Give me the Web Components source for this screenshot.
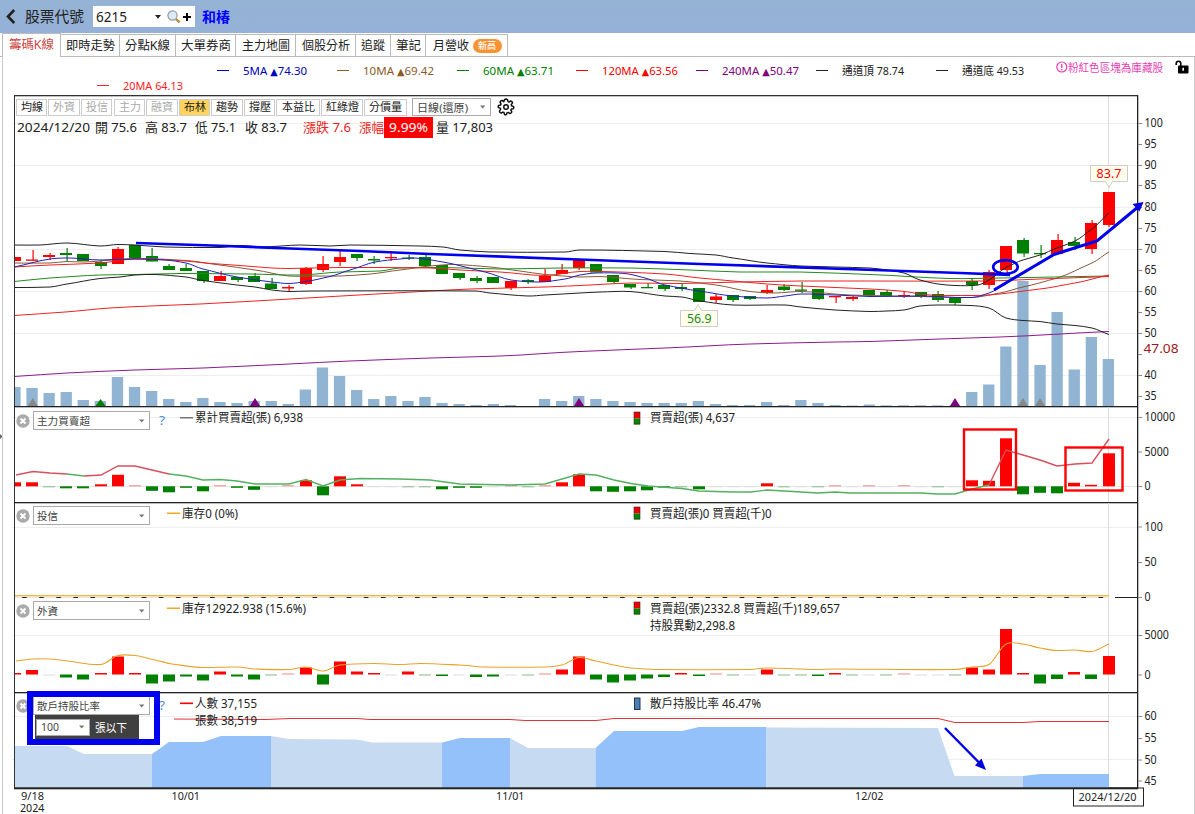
<!DOCTYPE html>
<html lang="zh-Hant">
<head>
<meta charset="utf-8">
<title>籌碼K線</title>
<style>
html,body{margin:0;height:100%;background:#fff;overflow:hidden;font-family:"Noto Sans","Noto Sans CJK TC",sans-serif}
</style>
</head>
<body>
<stock-app></stock-app>
<script>
const FONT='"Noto Sans","Noto Sans CJK TC",sans-serif';
const X=i=>15.6+17.085*i;
const el=(name,render)=>customElements.define(name,class extends HTMLElement{
  constructor(){super();this.attachShadow({mode:'open'});}
  connectedCallback(){this.shadowRoot.innerHTML=render(this);}
});
const text=(x,y,w,s,t,fill='#222',extra='')=>`<text x="${x}" y="${(y+s*.36).toFixed(2)}" textLength="${w}" lengthAdjust="spacingAndGlyphs" font-size="${s}" fill="${fill}" ${extra}>${t.replace('▲',`<tspan font-family="DejaVu Sans" font-size="${s*.85}">▲</tspan>`)}</text>`;
const line=(p,c,w=1,extra='')=>`<polyline points="${p}" fill="none" stroke="${c}" stroke-width="${w}" ${extra}/>`;
const rect=(x,y,w,h,c,extra='')=>`<rect x="${x}" y="${y}" width="${w}" height="${h}" fill="${c}" ${extra}/>`;
const smooth=(s,c,w=1)=>{
  const p=s.split(' ').map(q=>q.split(',').map(Number));let d=`M${p[0]}`;
  for(let i=0;i<p.length-1;i++){const a=p[i-1]||p[i],b=p[i],e=p[i+1],f=p[i+2]||e,k=(e[0]-b[0])/3;
    const m1=(e[1]-a[1])/(e[0]-a[0]),m2=(f[1]-b[1])/(f[0]-b[0]);
    d+=`C${b[0]+k},${(b[1]+k*m1*.8).toFixed(1)} ${e[0]-k},${(e[1]-k*m2*.8).toFixed(1)} ${e}`;}
  return `<path d="${d}" fill="none" stroke="${c}" stroke-width="${w}"/>`;
};

/* Single run of text drawn to a given width */
el('fit-text',e=>{
  const g=k=>e.getAttribute(k),w=+g('w'),s=+(g('size')||12),h=Math.ceil(s*1.3);
  return `<style>:host{display:block;flex:none;width:${w}px;height:${h}px;margin-left:${g('ml')||0}px;color:${g('color')||'inherit'}}svg{display:block;overflow:visible;font-family:${FONT.replace(/"/g,"'")}}</style>
  <svg width="${w}" height="${h}">${text(0,h/2,w,s,g('text'),'currentColor',`font-weight="${g('weight')||400}"`)}</svg>`;
});

el('select-box',e=>{
  const g=k=>e.getAttribute(k);
  return `<style>:host{display:flex;flex:none;align-items:center;justify-content:space-between;box-sizing:border-box;width:${g('w')}px;height:${g('h')||19}px;border:1px solid #aaa;background:#fff;color:#444;padding:0 4px 0 3px}</style>
  <slot></slot><svg width="6" height="4"><path d="M0 .5h5.4L2.7 3.5z" fill="#777"/></svg>`;
});

el('app-header',()=>`<style>
:host{display:flex;align-items:center;height:33px;background:linear-gradient(#95b3d4,#95b1d8);box-sizing:border-box;padding-left:6px;color:#222}
.in{display:flex;align-items:center;width:102px;height:21px;background:#fff;margin-left:9px;flex:none}
</style>
<svg width="10" height="15" viewBox="0 0 10 15"><path d="M8.2 1 2 7.5 8.2 14" fill="none" stroke="#222" stroke-width="2.6"/></svg>
<fit-text ml="9" w="59" size="15" text="股票代號"></fit-text>
<div class="in"><fit-text ml="3" w="31" size="14.5" text="6215"></fit-text>
<svg width="6" height="4" style="margin-left:28px"><path d="M0 0h6L3 3.8z" fill="#222"/></svg>
<svg width="14" height="14" viewBox="0 0 14 14" style="margin-left:6px"><circle cx="5.5" cy="5.5" r="4.6" fill="#d8ebf8" stroke="#999" stroke-width="1.2"/><path d="M9 9l3.5 3.3" stroke="#b58a3c" stroke-width="2.4"/></svg>
<svg width="8" height="8" style="margin-left:2px"><path d="M4 0v8M0 4h8" stroke="#000" stroke-width="2"/></svg></div>
<fit-text ml="7" w="28" size="14" weight="700" color="#00f" text="和椿"></fit-text>`);

el('app-tabs',()=>{
  const tabs=[['即時走勢',60,59,49],['分點K線',119,56,45],['大單券商',175,60,50],['主力地圖',235,60,48],['個股分析',295,60,48],['追蹤',355,35,24],['筆記',390,35,25]];
  return `<style>
:host{display:flex;align-items:flex-end;height:24px;box-sizing:border-box;border-bottom:1px solid #bbb;padding-left:2px}
div{box-sizing:border-box;display:flex;align-items:center;justify-content:center;height:22px;border:1px solid #bbb;border-bottom:0;border-left:0;background:#fff;color:#222}
.on{width:59px;height:24px;margin-bottom:-1px;border-left:1px solid #bbb;color:#c44;padding-right:1px;padding-bottom:1px}
.pill{width:29px;height:14px;border:0;border-radius:7px;background:#f99233;color:#fff;margin-left:4px;padding:0}
</style><div class="on"><fit-text w="45" size="12" text="籌碼K線"></fit-text></div>
${tabs.map(t=>`<div style="width:${t[2]}px"><fit-text w="${t[3]}" size="12.3" text="${t[0]}"></fit-text></div>`).join('')}
<div style="width:82px"><fit-text w="36" size="12.3" text="月營收" ml="1"></fit-text><div class="pill"><fit-text w="18" size="9" weight="500" text="新高"></fit-text></div></div>`;
});

el('ma-legend',()=>{
  const it=[['5MA ▲74.30','#00b',64],['10MA ▲69.42','#8a5a28',71],['60MA ▲63.71','#008000',71],['120MA ▲63.56','#f00',76],['240MA ▲50.47','#800080',77],['通道頂 78.74','#222',62],['通道底 49.53','#222',62]];
  const item=t=>`<div class="it" style="color:${t[1]}"><i></i><fit-text w="${t[2]}" size="11.5" text="${t[0]}"></fit-text></div>`;
  return `<style>
:host{display:flex;height:38px;position:relative;box-sizing:border-box}
.rows{width:1040px;padding-left:217px;box-sizing:border-box;padding-top:6px;flex:none}
.r{display:flex;height:15px}.it{display:flex;align-items:center;width:119.8px;flex:none}
i{width:12px;height:1px;background:currentColor;margin-right:14px}
.note{display:flex;align-items:center;height:20px;padding-left:16px;color:#e83fb4}
</style><div class="rows"><div class="r">${it.map(item).join('')}</div><div class="r" style="margin-left:-120px">${item(['20MA 64.13','#f22',60])}</div></div>
<div class="note"><svg width="12" height="12"><circle cx="5.8" cy="6" r="5" fill="none" stroke="#e83fb4" stroke-width="1.2"/><path d="M5.8 3v4M5.8 8v1.4" stroke="#e83fb4" stroke-width="1.3"/></svg><fit-text w="95" size="11.2" text="粉紅色區塊為庫藏股"></fit-text>
<svg width="14" height="14" viewBox="0 0 14 14" style="margin-left:12px"><path d="M1.2 5V3.5a2.3 2.3 0 0 1 4.6 0V6" fill="none" stroke="#000" stroke-width="1.6"/><rect x="3" y="5.5" width="10.5" height="8" rx="1" fill="#000"/><path d="M8.2 7.8v3" stroke="#fff" stroke-width="1.6"/></svg></div>`;
});

el('chart-toolbar',()=>{
  const b=[['均線',16,31,22],['外資',48,32,22,'#aaa'],['投信',81,31,22,'#aaa'],['主力',114,31,22,'#aaa'],['融資',146,32,22,'#aaa'],['布林',179,31,22,'','#ffd35c'],['趨勢',211,32,22],['撐壓',244,31,22],['本益比',276,44,33],['紅綠燈',321,42,33],['分價量',364,43,33]];
  return `<style>
:host{display:flex;flex-direction:column}
.r{display:flex;align-items:center;height:18px;padding-top:3px}
.b{display:flex;align-items:center;justify-content:center;height:17px;box-sizing:border-box;border:1px solid #ccc;flex:none;color:#222;padding-top:1px}
.info{display:flex;align-items:center;height:21px;padding-top:1px;color:#222;padding-left:17px}
.hot{display:flex;align-items:center;justify-content:center;width:49px;height:21px;background:#f00;color:#fff}
</style><div class="r">${b.map((t,i)=>`<div class="b" style="margin-left:${t[1]-(i?b[i-1][1]+b[i-1][2]:0)}px;width:${t[2]}px;${t[4]?'color:'+t[4]+';':''}${t[5]?'background:'+t[5]:''}"><fit-text w="${t[3]}" size="11" text="${t[0]}"></fit-text></div>`).join('')}
<select-box w="79" h="18" style="margin-left:5px"><fit-text w="51" size="11.3" ml="1" text="日線(還原)"></fit-text></select-box>
<svg width="18" height="18" viewBox="0 0 24 24" style="margin-left:6px" fill="none" stroke="#111" stroke-width="2" stroke-linejoin="round"><path d="M10 2.2Q12 .8 14 2.2L14.7 4.8 16 5.4 18.3 4Q20.7 4.6 20.7 6.8L19 8.7 19.4 10.4 22 11.5Q23 12.8 21.7 14.2L19.2 14.8 18.5 16.2 19.8 18.5Q19 21 16.8 20.6L14.8 19.2 13.3 19.8 12.6 22Q11.4 23 10 21.8L9.3 19.4 7.8 18.8 5.5 20.2Q3 19.3 3.4 17.1L4.8 15.1 4.3 13.7 2.1 12.8Q1 11.5 2.2 10L4.8 9.4 5.4 7.8 4 5.6Q4.8 3 7.2 3.4L9 4.9z"/><circle cx="12" cy="12" r="3"/></svg></div>
<div class="info"><fit-text w="73" size="12.8" text="2024/12/20"></fit-text>
<fit-text ml="5" w="42" size="12.8" text="開 75.6"></fit-text><fit-text ml="8" w="42" size="12.8" text="高 83.7"></fit-text><fit-text ml="8" w="41" size="12.8" text="低 75.1"></fit-text><fit-text ml="9" w="42" size="12.8" text="收 83.7"></fit-text>
<fit-text ml="16" w="48" size="12.8" color="#e22" text="漲跌 7.6"></fit-text><fit-text ml="8" w="25" size="12.8" color="#e22" text="漲幅"></fit-text><div class="hot"><fit-text w="39" size="12.5" text="9.99%"></fit-text></div><fit-text ml="3" w="57" size="12.8" text="量 17,803"></fit-text></div>`;
});

const frame=(y0,y1,labels,grid,bottom='#222')=>{
  let s=grid.map(y=>rect(12,y,1125,1,'#eee')).join('')+rect(1108,y0,1,y1-y0,'#ddd');
  return {under:s,over:rect(14,y0,1,y1-y0,'#333')+rect(1137,y0,1.3,y1-y0,'#222')+(bottom?rect(14,y1-1,1124,1.3,bottom):'')+labels.map(l=>rect(1138,l[0],4,1,'#888')+(l[1]?text(1144.5,l[0]-.3,l[1].length*6.1,12,l[1]):'')).join('')};
};
const stack=`:host{display:grid;position:relative}svg.c,.ui{grid-area:1/1}svg.c{display:block;overflow:visible;font-family:${FONT}}.ui{z-index:1;display:flex;flex-direction:column}`;

/* Price pane: [colour, body top, body bottom, wick top, wick bottom] per session */
const K='r257,261 r259.5,260.5,250 r255,257,253,260 g253,255,248,261 g254,261 g262,266,260,269 r249,264,247 g245,258 g256,261.5,248 g266,270,264 g268,271,264 g271,281,271,283 r276,281,271 g277,280,277,282 g276,282,273 g283.5,289,278 r287,288.5,285,291 r268,284,267,285 r264,270,256,272 r257,262,250,266 g254,258,254,261 g259,260.5,256,264 r257,258,251,261 g257.5,258,255,260 g257,266,253 g265,274 g273,278,273,280 g278,281,276,283 g277,283 r281,288,281,290 g280,282,279,284 r276,282,269 r270,274,264 r260,268,260,270 g264,272.5 g275,282,275,284 g284,287.5,284,289 g287,288,283 g285,289,285,291 g287,289,283,291 g288,302 r296.5,300,294,303 g295,300,295,302 g296,299,296,300 r290,293,285,294 g286.5,290,284,291 g289.5,290.5,282,293 g289,299,289,300 r296,297,296,303 r297,299,296,301 g290,295 g292,296,290,297 r295,296,292,298 g292,297,292,298 g294,300,291,302 g298,303,298,305 g281,285,279,290 r272,285,270,289 r246,270,246,273 g240,253.5,238,257 g253,254,245,258 r240,254,234,254 g242,246,237,250 r223,249,220,254 r192,225,192,227'.split(' ');
const V=[387,388,393,392,400,401,377,387,391,399,402,398,402,403,401,401,404,389.5,367.5,376,390,399,396,401,397,403,404,405,404,405,406,399,401,396,399,401,402,403,403,403,401,404,405,405,402,405,400,403,405,405.5,404.5,405.3,405.3,405.3,405.3,405.5,392,384.5,346.5,281,365,312,369.5,337,359];
el('price-chart',()=>{
  const f=frame(95,407,[[123,'100'],[144,'95'],[165,'90'],[185,'85'],[207,'80'],[228,'75'],[249,'70'],[270,'65'],[291,'60'],[312,'55'],[333,'50'],[354,''],[375,'40'],[396,'35']],[123,165,207,249,291,333,375]);
  const tri=(x,c,h=9)=>`<path d="M${x} ${407-h}l5 ${h-1}h-10z" fill="${c}"/>`;
  const vols=V.map((v,i)=>{const x=Math.max(15,X(i)-6.3);return rect(x.toFixed(1),v,(X(i)+5-x).toFixed(1),Math.max(0,406-v),'#92b4d3')}).join('');
  const ks=K.map((k,i)=>{const c=k[0]=='r'?'#f00':'#008000',[t,b,w=t,z=b]=k.slice(1).split(',').map(Number),x=Math.max(15,Math.floor(X(i)-6));
    return (i?rect(Math.round(X(i))-.5,w,1.2,z-w,c):'')+rect(x,t,Math.floor(X(i)+6)-x,Math.max(1.3,b-t),c)}).join('');
  return `<style>${stack}</style><svg class="c" width="1195" height="312" viewBox="0 95 1195 312">${f.under}${vols}${tri(32.7,'#888')}${tri(100.5,'#008000',8)}${tri(255,'#800080')}${tri(579,'#800080')}${tri(955,'#800080')}${tri(1023,'#888')}${tri(1040,'#888')}${ks}
${smooth('14,263 50,263 67,261.5 85,262 135,258.5 186,260.5 220,265 255,270 289,276 315,276 340,276 370,274 400,270 430,266 455,264.5 490,267 520,271 545,274.5 580,277 600,276.5 640,279.5 680,281 716,285 750,291.5 775,293 801,291.5 850,295 920,296.5 972,297.5 1000,293 1023,287 1057,278 1092,263 1109,252','#8a5a38')}
${smooth('14,281.5 50,278 100,275 135,274.5 180,273.5 250,274 300,275 340,272 380,271 400,268 443,267.5 500,269 560,268 630,268 690,270 740,272 800,272 870,274.5 950,278.5 1000,278 1109,276','#228b22')}
${smooth('14,267 50,265 100,263 135,259 186,261 205,263 240,265.5 272,268 289,268.5 340,267.5 430,268 460,270 500,272 545,275.5 580,271.5 620,272 665,274 700,278 733,281 767,284 801,286 870,289 900,291 930,295 972,295.5 989,295 1040,289 1075,283 1109,275','#e22')}
${smooth('14,315.5 65,312 110,308 150,306 200,304 290,299 350,295.5 430,291 470,289 545,287 590,285 630,283 680,283.5 740,282 801,281 870,281 989,281 1040,279 1109,276.5','#e22')}
${smooth('14,376.5 67,373 135,370 203,368 289,364 350,361 430,358 500,356 580,351.5 665,348 750,344 835,342 870,341.5 940,339 1000,337 1109,331.5','#8b1a8b')}
${smooth('14,267 50,259 70,258 100,260 135,259 165,260 186,263 203,269 237,277 272,282 289,283.5 306,281.5 330,276.5 350,270 375,262 400,259 415,258 443,262 485,272 511,280 540,282 565,279 580,275 596,273 625,273.5 645,278 665,285 699,291 733,296 767,298 785,296 801,294 835,295 870,296.5 920,296 972,297.5 989,293 1006,284','#22b')}
${smooth('14,245 40,245 67,243 100,246 118,244.5 135,245 165,247 220,247.5 240,245.5 262,247 300,245 330,246 350,245 420,246 443,247 460,250 490,252 565,252 580,250 665,251.5 690,253.5 716,255 733,258 767,263 801,266 835,267 870,268 887,270 904,273 920,280 938,284 955,285.5 978,285 989,280 1006,267.5 1023,260 1040,255 1057,248 1075,241 1092,229 1109,213','#222')}
${smooth('14,287.5 50,287 67,284 100,278.5 120,277 135,275 155,274.5 186,277 203,280.5 237,285 255,287 272,290 289,291.5 310,291 475,291 490,293 528,296 545,295 580,293 600,292 630,291.5 665,296 682,297 700,301 733,305 785,305 801,307 835,310 870,311.5 887,311 904,310 920,306 938,305 970,305.5 989,308 1006,318 1023,320.5 1040,321.5 1057,324 1075,325.5 1092,328 1109,334.5','#222')}
${f.over}${rect(14,95,1124,1.3,'#333')}
${text(1143.5,348,35,13,'47.08','#a01818')}
<g stroke="#ccc" fill="#ffffec"><path d="M680.5 310.5h14l3.5-6 3.5 6h16v16h-37z"/><path d="M1090.5 165.5h37v16h-15l-3.5 6-3.5-6h-15z"/></g>
${text(687,318.5,24.5,12,'56.9','#228b22')}${text(1096.5,173.5,25,12,'83.7','#f00')}
${line('136,243 212,245.5 290,248.5 360,251 430,254 579,259.5 700,264 860,269.5 960,273 1010,274.8','#00e',2.7)}
${line('994,290 1054,254.5 1097,241 1138,207','#00e',3)}<path d="M1143.5 202L1132.5 204 1139.5 211.5z" fill="#00d"/>
<ellipse cx="1005.5" cy="267" rx="12.3" ry="6.8" fill="none" stroke="#00e" stroke-width="2.7"/></svg>
<div class="ui"><chart-toolbar></chart-toolbar></div>`;
});

/* Heading row shared by the indicator panes */
el('pane-head',e=>{
  const g=k=>e.getAttribute(k);
  return `<style>:host{display:flex;align-items:center;height:19px;padding:${g('top')||3}px 0 0 16px}.x{margin-right:3px}</style>
<svg class="x" width="14" height="14" viewBox="0 0 14 14"><circle cx="7" cy="7" r="6.7" fill="#aaa"/><path d="M4.5 4.5l5 5M9.5 4.5l-5 5" stroke="#fff" stroke-width="2"/></svg>
<select-box w="117"><fit-text w="${g('w')}" size="10.6" text="${g('name')}"></fit-text></select-box>${g('help')!=null?'<fit-text ml="9" w="6" size="12.5" color="#4a90d9" text="?"></fit-text>':''}`;
});
const bars=(s,z)=>s.split(' ').map((v,i)=>{v=+v;const a=Math.abs(v),x=Math.max(15,Math.floor(X(i)-6)),c=a<.6?'#ddd':a<1.2?(v>0?'#e88':'#8b8'):v>0?'#f00':'#008000',h=Math.max(1,a);return rect(x,v>0?z-h:z,Math.floor(X(i)+6)-x,h,c)}).join('');
const swatch=y=>rect(634,y-6,6,6.5,'#e00')+rect(634,y+.5,6,6,'#080')+`<rect x="634" y="${y-6}" width="6" height="12" fill="none" stroke="#422" stroke-width=".6"/>`;

el('major-pane',()=>{
  const f=frame(407,503,[[417,'10000'],[451.5,'5000'],[486,'0']],[417]);
  const r='#d8505c',g='#54b060';
  return `<style>${stack}</style><svg class="c" width="1195" height="96" viewBox="0 407 1195 96">${f.under}${rect(15,486,1122,.7,'#ddd')}
${bars('4 4 -1 -2 -2 2 11.5 1 -4.5 -6 -1.5 -5 1 -1.5 -3.5 0 1 6 -9 10 2 0 0 -1 -1 -3 -1.5 -1.5 0 1 -1 1 4 12 -5 -5.5 -5 -4 -1.3 -.8 -3 0 0 0 3 -1 0 -1 1 0 1 0 1 0 -1 0 6 5.5 48 -8 -6.5 -7 3.5 1.5 33',486.3)}
${line('16,475 33,471.5 50,473 67,474',r,1.4)}${line('67,474 84,476',g,1.4)}${line('84,476 101,475 118,466 135,466 152,470 169,474',r,1.4)}
${line('169,474 186,476 203,480 220,479.5 237,481 255,484 289,484 306,479.5 323,486 340,480 360,478.5 400,479 430,480 460,484 511,485 545,484 579,474 596,475 614,480 631,483.5 648,486 682,488.5 699,491 733,492 751,492 767,490 818,493 835,492 850,493 920,493 938,494 955,494 972,489 989,485',g,1.4)}
${line('989,485 1006,450 1023,455 1040,460 1057,466 1075,464 1092,463 1109,439',r,1.4)}
<rect x="964" y="429.5" width="52" height="60" fill="none" stroke="#f00" stroke-width="2.4"/><rect x="1065.5" y="447.5" width="57" height="43" fill="none" stroke="#f00" stroke-width="2.4"/>
${rect(180,417,13,1.5,'#777')}${text(195,418,108,12,'累計買賣超(張) 6,938')}${swatch(418)}${text(650,418,85,12,'買賣超(張) 4,637')}${f.over}</svg>
<div class="ui"><pane-head name="主力買賣超" w="53" top="4" help></pane-head></div>`;
});
el('trust-pane',()=>{
  const f=frame(503,598,[[526.5,'100'],[562,'50'],[597,'0']],[527],'');
  return `<style>${stack}:host{z-index:1}</style><svg class="c" width="1195" height="95" viewBox="0 503 1195 95">${f.under}${rect(15,595,1094,1,'#e8b94a')}${rect(15,596,1094,2,'#f3e4c4')}${Array.from({length:64},(_,i)=>rect((X(i)+6.5).toFixed(1),597,4.6,1,'#222')).join('')}${rect(1115,597,23,1,'#222')}
${rect(167,512.5,13,1.5,'#f5a623')}${text(182,513.3,56,12,'庫存0 (0%)')}${swatch(513)}${text(650,513.3,121.5,12,'買賣超(張)0 買賣超(千)0')}${f.over}</svg>
<div class="ui"><pane-head name="投信" w="21"></pane-head></div>`;
});
el('foreign-pane',()=>{
  const f=frame(598,693,[[635,'5000'],[674.5,'0']],[635]);
  return `<style>${stack}</style><svg class="c" width="1195" height="95" viewBox="0 598 1195 95">${f.under}
${bars('1.5 4.5 0 -3 -5 1.5 18 1.5 -9 -7 -2 -6 3 -2 -5 -1 1 7 -10 13 3 1.5 0 3 -1 -1.5 0 -2.5 -2 0 -1 1 5 18 -5 -8 -6 -4 -2.5 1.5 -1.5 1 -1 0 5 -1 -1 -1.5 1.5 -1 0 -1 1 0 0 -1 7 5 45.5 1.5 -9 -4.5 2.5 -4.5 18.5',674.5)}
${smooth('16,661 33,659 50,659 67,661 101,664.5 118,655.5 135,655.5 155,660 172,664 203,667.5 237,667 255,669 289,669.5 306,667 323,671 340,665 374,663.5 400,664.5 420,663.5 460,665 485,667 545,667 562,665 579,657.5 596,661 614,665 631,668 655,669.5 750,669.5 767,668 800,669 815,669.5 835,669 955,669.5 972,667 989,664.5 1006,644 1023,644 1040,648 1057,650.5 1075,650 1092,651.5 1109,644','#eaa22a',1.1)}
${rect(167,607.5,13,1.5,'#f5a623')}${text(182,608.3,124,12,'庫存12922.938 (15.6%)')}${swatch(608)}${text(650,608.3,190,12,'買賣超(張)2332.8 買賣超(千)189,657')}${text(650,625.3,85,12,'持股異動2,298.8')}${f.over}</svg>
<div class="ui"><pane-head name="外資" w="21"></pane-head></div>`;
});
el('retail-pane',()=>{
  const f=frame(693,789,[[716,'60'],[738,'55'],[759.5,'50'],[780.5,'45']],[716,759]);
  const L='#c6dbf2',D='#94c1f9';
  const A=(p,c)=>{const q=p.split(' ');return `<polygon points="${q[0].split(',')[0]},788 ${p} ${q[q.length-1].split(',')[0]},788" fill="${c}"/>`};
  return `<style>${stack}
.param{display:flex;align-items:center;width:104px;height:24px;margin-left:35px;background:#404040;color:#fff;padding-left:1px;box-sizing:border-box}
.mark{position:absolute;z-index:2;left:27px;top:-2px;width:133px;height:54px;border:6px solid #0000f0;box-sizing:border-box}
</style><svg class="c" width="1195" height="96" viewBox="0 693 1195 96">${f.under}
${A('14,746 67,746 84,754 152,754',L)}${A('152,754 169,742 203,742 221,736 271,736',D)}${A('271,736 289,739 357,739.5 372,742.5 442,742.5',L)}${A('442,742.5 460,738 510,738',D)}${A('510,738 528,748 595.5,748',L)}${A('595.5,748 614,731 682,731 699,727 766.5,727',D)}${A('766.5,727.5 938,728 954.5,776 1023,776',L)}${A('1023,776 1040,774 1109,774',D)}
${line('174,719 265,719.5 290,718.5 357,718.5 370,719.5 510,719.5 525,720.5 596,720.5 614,718.5 938,718.5 955,722.5 1023,722.5 1040,721.5 1109,721.5','#e03038',1)}
${rect(180,702.5,13,1.6,'#f00')}${text(195,703.5,62,12,'人數 37,155')}${text(195,720.3,62,12,'張數 38,519')}<rect x="634.5" y="698" width="5.5" height="11.5" fill="#4682b4" stroke="#235"/>${text(650,703.5,111,12,'散戶持股比率 46.47%')}
${f.over}${rect(14,787.3,1124,1.7,'#222')}${line('945,728 980,763.5','#00e',2.4)}<path d="M986 770L975 765.5 981.5 758.5z" fill="#00d"/></svg>
<div class="ui"><pane-head name="散戶持股比率" w="63" help></pane-head><div class="param"><select-box w="54" h="17"><fit-text w="18" size="11" text="100" ml="1"></fit-text></select-box><fit-text ml="5" w="32" size="11.5" text="張以下"></fit-text></div></div><div class="mark"></div>`;
});
el('date-axis',()=>`<style>:host{display:block;height:25px}svg{display:block;overflow:visible;font-family:${FONT}}</style>
<svg width="1195" height="25" viewBox="0 789 1195 25">${text(21,796.5,23,10.2,'9/18')}${text(20,808.8,24.5,10,'2024')}${text(171.5,796.5,28.5,10.2,'10/01')}${text(496,796.5,28.5,10.2,'11/01')}${text(855,796.5,28.5,10.2,'12/02')}<rect x="1073.5" y="788" width="70" height="18" fill="#fff" stroke="#222"/>${text(1078.5,797,58,11.3,'2024/12/20')}</svg>`);

el('stock-app',()=>`<style>
:host{display:flex;flex-direction:column;width:1195px;height:814px;overflow:hidden;position:relative}
.edge{position:absolute;z-index:3;left:2px;top:57px;bottom:0;width:1191px;border:solid #ccc;border-width:0 1px;pointer-events:none}
.grip{position:absolute;left:0;top:434px;display:block}
</style><app-header></app-header><app-tabs></app-tabs><ma-legend></ma-legend><price-chart></price-chart><major-pane></major-pane><trust-pane></trust-pane><foreign-pane></foreign-pane><retail-pane></retail-pane><date-axis></date-axis><div class="edge"></div><svg class="grip" width="3" height="5"><path d="M0 0l2.5 2.5L0 5z" fill="#666"/></svg>`);
</script>
</body>
</html>
